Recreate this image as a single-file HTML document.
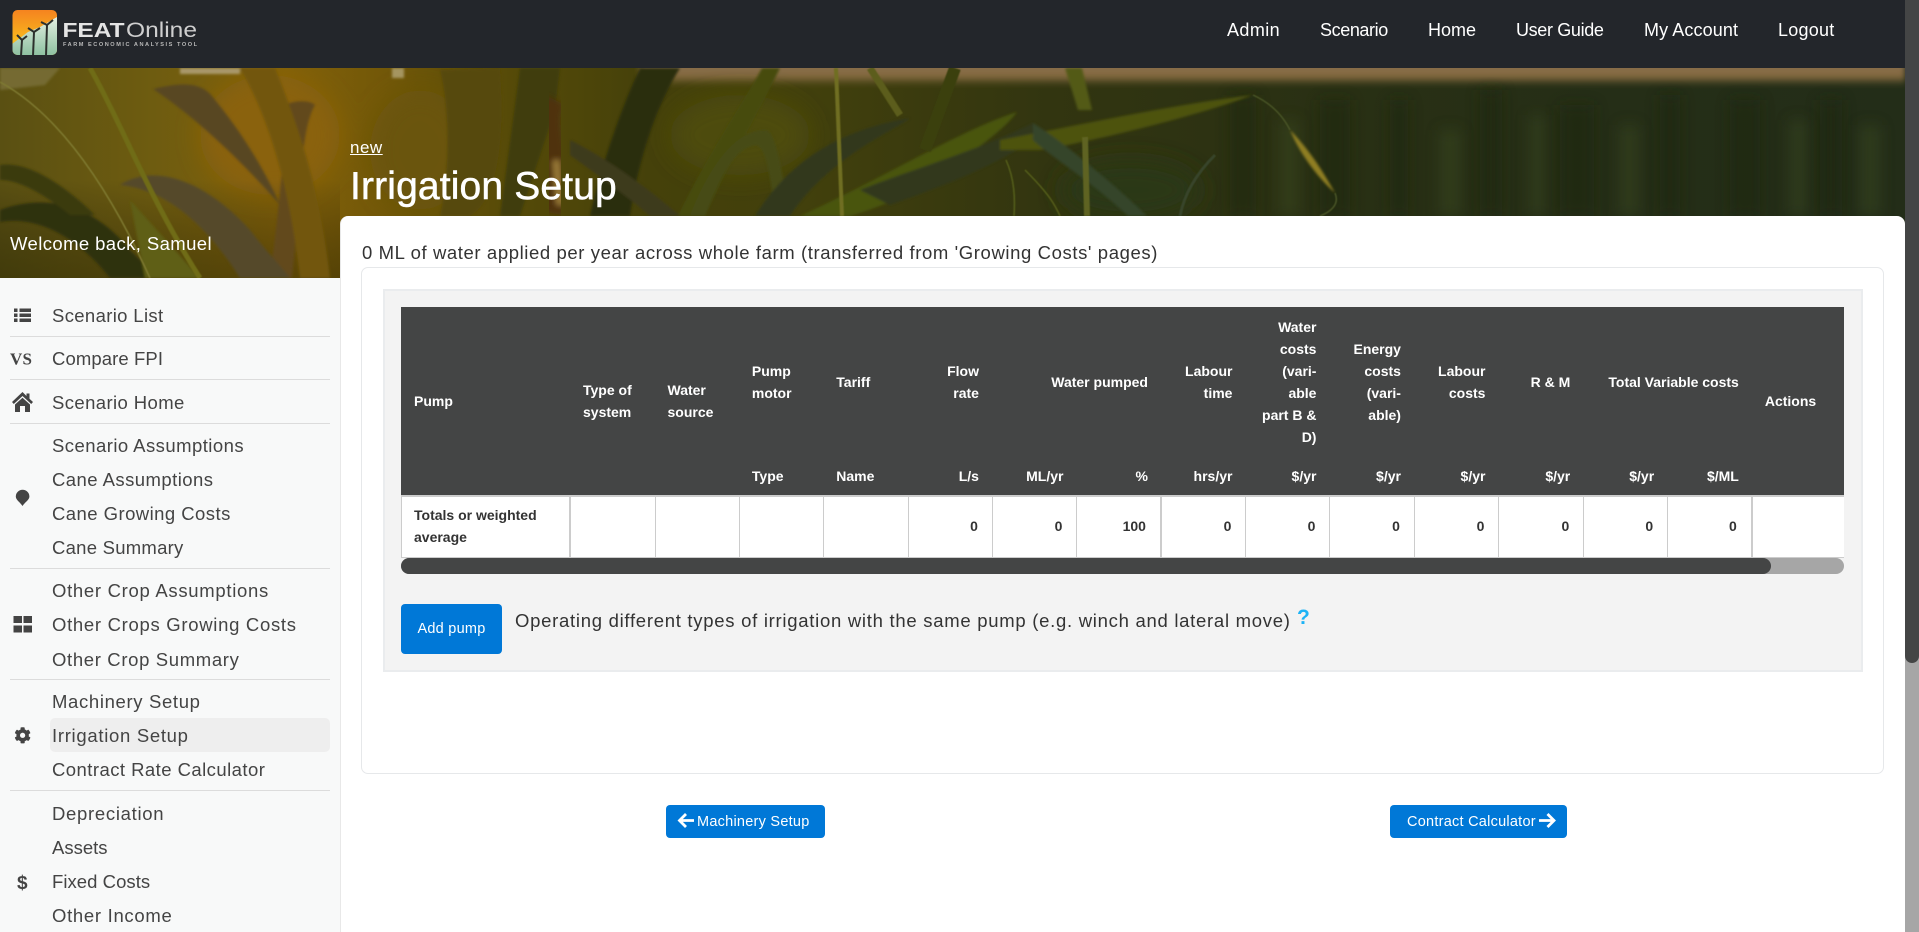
<!DOCTYPE html>
<html lang="en"><head><meta charset="utf-8"><title>Irrigation Setup</title>
<style>
*{box-sizing:border-box}
html,body{margin:0;padding:0;width:1919px;height:932px;overflow:hidden;background:#fff;font-family:"Liberation Sans",sans-serif}
.a{position:absolute;white-space:nowrap}
#top{position:absolute;left:0;top:0;width:1919px;height:68px;background:#23262b}
.nav{position:absolute;top:17px;line-height:26px;font-size:18px;color:#fff}
#side{position:absolute;left:0;top:278px;width:340px;height:654px;background:#f8f9f9}
.s{position:absolute;left:52px;font-size:18.5px;line-height:26px;color:#444;white-space:nowrap;letter-spacing:.4px}
.d{position:absolute;left:10px;width:320px;height:1px;background:#dcdcdc}
#card{position:absolute;left:340px;top:216px;width:1565px;height:716px;background:#fff;border-radius:8px 8px 0 0;border-left:1px solid #e8e8e8}
#inner{position:absolute;left:361px;top:267px;width:1523px;height:507px;border:1px solid #e6e8ea;border-radius:7px;background:#fff}
#box{position:absolute;left:383px;top:289px;width:1480px;height:383px;background:#f3f3f3;border:2px solid #eaecee}
#tw{position:absolute;left:401px;top:307px;width:1443px;height:251px;overflow:hidden}
table{border-collapse:separate;border-spacing:0;table-layout:fixed;width:1444px;font-size:14px;font-weight:700}
th{background:#444545;color:#fff;line-height:22px;padding:0 14px 0 12px;font-weight:700;text-align:left;vertical-align:middle}
th.r,td.r{text-align:right}
th.p{padding-left:13px}
td{height:63px;border-top:2px solid #ccc;border-bottom:1px solid #ccc;border-right:1px solid #ccc;background:#fff;color:#333;line-height:22px;padding:0 14px 2px 13px;vertical-align:middle}
td.f{border-left:1px solid #ccc;padding-left:12px}
td.t{border-right-width:2px}
.btn{position:absolute;background:#0078d7;color:#fff;font-size:14.5px;letter-spacing:.25px;border-radius:4px;text-align:center;white-space:nowrap}
#sb{position:absolute;left:1905px;top:0;width:14px;height:932px;background:#a6a6a6}
#sbt{position:absolute;left:1905px;top:0;width:14px;height:663px;background:#444545;border-radius:0 0 7px 7px}
</style></head><body>

<svg class="a" style="left:0;top:0" width="1905" height="278" viewBox="0 0 1905 278">
<defs>
<linearGradient id="bg" x1="0" x2="1" y1="0" y2="0">
<stop offset="0" stop-color="#5a5012"/><stop offset=".08" stop-color="#6e5c10"/><stop offset=".15" stop-color="#82610a"/><stop offset=".2" stop-color="#735808"/><stop offset=".27" stop-color="#554a08"/><stop offset=".34" stop-color="#45410a"/><stop offset=".42" stop-color="#42400c"/><stop offset=".55" stop-color="#323510"/><stop offset=".7" stop-color="#293014"/><stop offset=".85" stop-color="#252e17"/><stop offset="1" stop-color="#232d18"/>
</linearGradient>
<linearGradient id="sky" x1="0" x2="0" y1="0" y2="1"><stop offset="0" stop-color="#8a7050"/><stop offset=".6" stop-color="#84693f"/><stop offset="1" stop-color="#6a5a30" stop-opacity="0"/></linearGradient>
<linearGradient id="shade" x1="0" x2="0" y1="0" y2="1"><stop offset="0" stop-color="#000" stop-opacity="0"/><stop offset="1" stop-color="#1a1a00" stop-opacity=".38"/></linearGradient>
<filter id="b1"><feGaussianBlur stdDeviation="12"/></filter>
<filter id="b2"><feGaussianBlur stdDeviation="1.200"/></filter>
<filter id="b3"><feGaussianBlur stdDeviation=".6"/></filter>
<filter id="b4"><feGaussianBlur stdDeviation="3"/></filter>
<filter id="b5"><feGaussianBlur stdDeviation="7"/></filter>
</defs>
<rect x="0" y="68" width="1905" height="210" fill="url(#bg)"/>
<g filter="url(#b4)"><rect x="640" y="62" width="1265" height="24" fill="url(#sky)"/></g>
<g filter="url(#b5)" fill="#1b2510" opacity=".55">
<rect x="1230" y="95" width="26" height="121"/><rect x="1320" y="100" width="30" height="116"/><rect x="1390" y="100" width="18" height="116"/><rect x="1480" y="90" width="22" height="126"/><rect x="1560" y="105" width="34" height="111"/><rect x="1660" y="95" width="20" height="121"/><rect x="1730" y="100" width="30" height="116"/><rect x="1820" y="100" width="22" height="116"/>
</g>
<g filter="url(#b5)" fill="#3b4a20" opacity=".5">
<rect x="1280" y="120" width="18" height="96"/><rect x="1440" y="130" width="20" height="86"/><rect x="1530" y="115" width="14" height="101"/><rect x="1620" y="125" width="18" height="91"/><rect x="1790" y="120" width="16" height="96"/><rect x="1860" y="125" width="20" height="91"/>
</g>
<g filter="url(#b1)">
<ellipse cx="270" cy="135" rx="70" ry="60" fill="#8a6208"/>
<ellipse cx="420" cy="150" rx="50" ry="60" fill="#6a5407"/>
<ellipse cx="1130" cy="190" rx="70" ry="30" fill="#2c3812"/>
<ellipse cx="740" cy="135" rx="70" ry="40" fill="#4d4b10"/>
</g>
<rect x="0" y="180" width="340" height="98" fill="url(#shade)"/>
<g filter="url(#b2)">
<rect x="180" y="68" width="60" height="6" fill="#a9986a"/>
<rect x="392" y="68" width="12" height="10" fill="#a59560"/>
<path d="M0,68 H60 L45,85 L0,90Z" fill="#746a30"/>
<path d="M153,89 C190,80 205,85 215,100 C240,130 265,170 280,205 C250,170 200,120 153,89Z" fill="#584722"/>
<path d="M285,105 C295,100 310,100 315,105 C300,130 300,200 292,278 L270,278 C280,200 285,150 285,105Z" fill="#62491a"/>
<path d="M240,68 L275,68 C300,130 320,190 330,278 L300,278 C290,190 270,120 240,68Z" fill="#725608"/>
<path d="M120,185 C150,165 200,175 250,230 C265,250 280,265 290,278 L240,278 C210,230 170,190 120,185Z" fill="#544a2c"/>
<path d="M0,210 C40,195 90,200 130,250 C150,270 160,278 160,278 L110,278 C80,240 40,215 0,222Z" fill="#2d3010"/>
<path d="M0,165 C30,160 70,190 95,215 L70,215 C45,195 20,180 0,180Z" fill="#3b3a10"/>
<path d="M130,200 L200,278 L145,278 Z" fill="#5f5e12"/>
<path d="M630,216 C640,150 660,100 680,68 L640,68 C620,110 600,170 590,216Z" fill="#2c2d09"/>
<path d="M440,70 L500,68 C505,130 500,200 470,216 L440,216 C450,170 450,110 440,70Z" fill="#574a08"/>
<path d="M520,68 H560 L555,110 L520,216 H500Z" fill="#3f3c08"/>
<path d="M678,216 C710,150 745,100 762,68 L780,68 C760,110 730,160 705,216Z" fill="#474b10"/>
<path d="M690,216 C720,140 750,130 765,130 C775,130 780,160 790,216 L775,216 C770,170 765,145 755,145 C730,150 715,190 705,216Z" fill="#464b18"/>
<path d="M755,216 C790,160 840,130 910,118 C900,128 830,155 790,216Z" fill="#33391f"/>
<path d="M570,140 C610,160 650,190 680,216 L650,216 C620,190 590,170 570,155Z" fill="#3c3a1e"/>
<path d="M800,216 C880,180 960,130 1017,112 C1000,135 960,160 930,180 C900,200 870,210 850,216Z" fill="#48540f"/>
<path d="M860,190 C910,170 980,150 1033,123 L1040,135 C990,170 930,190 890,205Z" fill="#30381f"/>
<path d="M1000,140 C1080,125 1170,105 1253,95 C1200,115 1100,140 1040,150 L1000,150Z" fill="#4d5210"/>
<path d="M1033,123 C1060,140 1110,180 1147,216 L1128,216 C1090,180 1055,160 1033,140Z" fill="#35452a"/>
<path d="M1065,68 H1082 L1092,110 H1078Z" fill="#525a18"/>
<path d="M1290,130 C1310,150 1325,175 1335,193 C1315,175 1298,150 1290,130Z" fill="#8f7e20"/>
</g>
<g filter="url(#b3)" fill="none">
<path d="M1085,137 L1087,216" stroke="#5e6420" stroke-width="6"/>
<path d="M0,82 C60,115 110,190 150,278" stroke="#7f7a32" stroke-width="1.500"/>
<path d="M90,68 C120,120 150,200 200,278" stroke="#6f6c16" stroke-width="5"/>
<path d="M836,68 L842,216" stroke="#6f6e20" stroke-width="4"/>
<path d="M870,68 L900,115" stroke="#5c5d1a" stroke-width="7"/>
<path d="M955,68 L925,150" stroke="#3b4010" stroke-width="12"/>
<path d="M1253,95 C1275,105 1285,120 1290,130 M1335,193 C1340,205 1330,212 1320,216" stroke="#4a5528" stroke-width="1.500"/>
<path d="M1025,170 C1050,195 1055,205 1060,216 M1006,160 C1015,180 1015,200 1014,216" stroke="#555f1a" stroke-width="1.500"/>
<path d="M1180,216 C1185,190 1200,170 1215,155" stroke="#38452a" stroke-width="3"/>
</g>
<g filter="url(#b4)" fill="none">
<path d="M555,100 C540,130 565,150 552,213" stroke="#50330f" stroke-width="20"/>
<path d="M556,160 L560,205" stroke="#9b7c38" stroke-width="7"/>
</g>
</svg>

<div id="top"></div>
<svg class="a" style="left:0;top:0" width="210" height="68" viewBox="0 0 210 68">
<defs>
<linearGradient id="lg" x1="0" x2="0" y1="0" y2="1"><stop offset="0" stop-color="#f5831f"/><stop offset=".6" stop-color="#f8b41e"/><stop offset="1" stop-color="#f7d220"/></linearGradient>
<linearGradient id="lg2" x1="0" x2="0" y1="0" y2="1"><stop offset="0" stop-color="#e4efe2"/><stop offset="1" stop-color="#8cc0a0"/></linearGradient>
<clipPath id="lc"><rect x="12.500" y="10" width="44.500" height="45" rx="5"/></clipPath>
</defs>
<g clip-path="url(#lc)">
<rect x="12" y="10" width="46" height="46" fill="url(#lg)"/>
<path d="M12,44 L28,32 L40,27 L57,17 V56 H12Z" fill="url(#lg2)"/>
<path d="M21,56 L22,40 L17,35 M22,40 L27,36 M33,56 L34,32 L28,28 M34,32 L40,28 M46,56 L47,25 L41,22 M47,25 L53,20" fill="none" stroke="#2c2f2c" stroke-width="2"/>
</g>
<text x="62.500" y="37" font-family="Liberation Sans" font-size="20" font-weight="700" fill="#e4e4e4" textLength="62" lengthAdjust="spacingAndGlyphs">FEAT</text>
<text x="126" y="37" font-family="Liberation Sans" font-size="21" fill="#cfcfcf" textLength="71" lengthAdjust="spacingAndGlyphs">Online</text>
<text x="63" y="46" font-family="Liberation Sans" font-size="5.600" font-weight="700" fill="#b8b8b8" textLength="134">FARM ECONOMIC ANALYSIS TOOL</text>
</svg>

<div class="nav" style="left:1227px;letter-spacing:.4px">Admin</div>
<div class="nav" style="left:1320px;letter-spacing:-.4px">Scenario</div>
<div class="nav" style="left:1428px">Home</div>
<div class="nav" style="left:1516px;letter-spacing:-.35px">User Guide</div>
<div class="nav" style="left:1644px;letter-spacing:.1px">My Account</div>
<div class="nav" style="left:1778px;letter-spacing:.25px">Logout</div>

<a class="a" style="left:350px;top:136px;font-size:17px;line-height:24px;letter-spacing:.5px;color:#fff;text-decoration:underline">new</a>
<div class="a" style="left:350px;top:163px;font-size:39px;line-height:48px;letter-spacing:.15px;color:#fff;-webkit-text-stroke:.5px #fff">Irrigation Setup</div>
<div class="a" style="left:10px;top:231px;font-size:18.5px;line-height:26px;letter-spacing:.4px;color:#fff">Welcome back, Samuel</div>

<div id="side">
</div>
<div class="a" style="left:50px;top:718px;width:280px;height:34px;background:#eeeeee;border-radius:5px"></div>
<div class="d" style="top:336px"></div><div class="d" style="top:379px"></div><div class="d" style="top:423px"></div><div class="d" style="top:568px"></div><div class="d" style="top:679px"></div><div class="d" style="top:790px"></div>
<div class="s" style="top:303px;letter-spacing:.35px">Scenario List</div>
<div class="s" style="top:346px;letter-spacing:.1px">Compare FPI</div>
<div class="s" style="top:390px">Scenario Home</div>
<div class="s" style="top:433px;letter-spacing:.45px">Scenario Assumptions</div>
<div class="s" style="top:467px;letter-spacing:.45px">Cane Assumptions</div>
<div class="s" style="top:501px;letter-spacing:.45px">Cane Growing Costs</div>
<div class="s" style="top:535px;letter-spacing:.25px">Cane Summary</div>
<div class="s" style="top:578px;letter-spacing:.7px">Other Crop Assumptions</div>
<div class="s" style="top:612px;letter-spacing:.7px">Other Crops Growing Costs</div>
<div class="s" style="top:647px;letter-spacing:.65px">Other Crop Summary</div>
<div class="s" style="top:689px;letter-spacing:.65px">Machinery Setup</div>
<div class="s" style="top:723px;letter-spacing:.7px">Irrigation Setup</div>
<div class="s" style="top:757px;letter-spacing:.45px">Contract Rate Calculator</div>
<div class="s" style="top:801px;letter-spacing:.7px">Depreciation</div>
<div class="s" style="top:835px;letter-spacing:0">Assets</div>
<div class="s" style="top:869px;letter-spacing:.05px">Fixed Costs</div>
<div class="s" style="top:903px;letter-spacing:.7px">Other Income</div>

<svg class="a" style="left:0;top:290px" width="50" height="642" viewBox="0 290 50 642" fill="#444">
<rect x="14" y="308.500" width="3.500" height="3.500"/><rect x="19.500" y="308.500" width="11.500" height="3.500"/>
<rect x="14" y="313.500" width="3.500" height="3.500"/><rect x="19.500" y="313.500" width="11.500" height="3.500"/>
<rect x="14" y="318.500" width="3.500" height="3.500"/><rect x="19.500" y="318.500" width="11.500" height="3.500"/>
<text x="10" y="364.500" font-family="Liberation Serif" font-weight="700" font-size="17" textLength="22">VS</text>
<path d="M22.500,392 L12,402 L13.800,404 L22.500,396 L31.200,404 L33,402 L29.500,398.700 V393.500 H26.500 V396 Z"/>
<path d="M15,404.500 L22.500,397.700 L30,404.500 V412 H25 V406 H20 V412 H15Z"/>
<path d="M22.500,506 C20,502 15.800,500 15.800,496.500 a6.800,6.800 0 0 1 13.600,0 C29.400,500 25,502 22.500,506Z"/>
<rect x="13.500" y="616" width="8.500" height="7"/><rect x="23.500" y="616" width="8.500" height="7"/><rect x="13.500" y="625.500" width="8.500" height="7"/><rect x="23.500" y="625.500" width="8.500" height="7"/>
<g transform="translate(14.300,727) scale(.0325)"><path fill-rule="evenodd" d="M487.400 315.700l-42.600-24.600c4.300-23.200 4.300-47 0-70.200l42.600-24.600c4.900-2.800 7.100-8.600 5.500-14-11.100-35.600-30-67.800-54.700-94.600-3.800-4.100-10-5.100-14.800-2.300L380.800 110c-17.900-15.400-38.500-27.300-60.800-35.100V25.800c0-5.600-3.900-10.500-9.400-11.700-36.700-8.200-74.300-7.800-109.200 0-5.500 1.200-9.400 6.100-9.400 11.700V75c-22.200 7.900-42.800 19.800-60.800 35.100L88.700 85.500c-4.900-2.800-11-1.900-14.800 2.300-24.700 26.700-43.600 58.900-54.700 94.600-1.700 5.400.6 11.200 5.500 14L67.300 221c-4.300 23.200-4.300 47 0 70.200l-42.600 24.600c-4.900 2.800-7.100 8.600-5.500 14 11.100 35.600 30 67.800 54.700 94.600 3.800 4.100 10 5.100 14.800 2.300l42.600-24.600c17.900 15.400 38.500 27.300 60.800 35.100v49.200c0 5.600 3.900 10.500 9.400 11.700 36.700 8.200 74.300 7.800 109.200 0 5.500-1.200 9.400-6.100 9.400-11.700v-49.200c22.200-7.900 42.800-19.800 60.800-35.100l42.600 24.600c4.900 2.800 11 1.900 14.800-2.300 24.700-26.700 43.600-58.900 54.700-94.600 1.500-5.500-.7-11.300-5.600-14.100zM256 336c-44.100 0-80-35.900-80-80s35.900-80 80-80 80 35.900 80 80-35.900 80-80 80z"/></g>
<text x="17" y="889" font-family="Liberation Sans" font-weight="700" font-size="19">$</text>
</svg>

<div id="card"></div>
<div class="a" style="left:362px;top:240px;font-size:18.5px;line-height:26px;letter-spacing:.6px;color:#333">0 ML of water applied per year across whole farm (transferred from 'Growing Costs' pages)</div>
<div id="inner"></div>
<div id="box"></div>

<div id="tw">
<table>
<colgroup><col style="width:170px"><col style="width:84.5px"><col style="width:84.4px"><col style="width:84.4px"><col style="width:84.3px"><col style="width:84.4px"><col style="width:84.5px"><col style="width:84.5px"><col style="width:84.5px"><col style="width:84px"><col style="width:84.5px"><col style="width:84.5px"><col style="width:84.8px"><col style="width:83.9px"><col style="width:84.7px"><col style="width:92.1px"></colgroup>
<thead>
<tr style="height:150px">
<th rowspan="2" class="p">Pump</th>
<th rowspan="2">Type of<br>system</th>
<th rowspan="2">Water<br>source</th>
<th>Pump<br>motor</th>
<th>Tariff</th>
<th class="r">Flow<br>rate</th>
<th class="r" colspan="2">Water pumped</th>
<th class="r">Labour<br>time</th>
<th class="r">Water<br>costs<br>(vari-<br>able<br>part B &amp;<br>D)</th>
<th class="r">Energy<br>costs<br>(vari-<br>able)</th>
<th class="r">Labour<br>costs</th>
<th class="r">R &amp; M</th>
<th class="r" colspan="2">Total Variable costs</th>
<th rowspan="2">Actions</th>
</tr>
<tr style="height:38px">
<th>Type</th><th>Name</th><th class="r">L/s</th><th class="r">ML/yr</th><th class="r">%</th><th class="r">hrs/yr</th><th class="r">$/yr</th><th class="r">$/yr</th><th class="r">$/yr</th><th class="r">$/yr</th><th class="r">$/yr</th><th class="r">$/ML</th>
</tr>
</thead>
<tbody><tr>
<td class="f t">Totals or weighted average</td><td></td><td></td><td></td><td></td><td class="r">0</td><td class="r">0</td><td class="r t">100</td><td class="r">0</td><td class="r">0</td><td class="r">0</td><td class="r">0</td><td class="r">0</td><td class="r">0</td><td class="r t">0</td><td style="border-right:0"></td>
</tr></tbody>
</table>
</div>
<div class="a" style="left:401px;top:558px;width:1443px;height:16px;background:#a6a6a6;border-radius:8px"></div>
<div class="a" style="left:401px;top:558px;width:1370px;height:16px;background:#444545;border-radius:8px"></div>

<div class="btn" style="left:401px;top:604px;width:101px;height:50px;line-height:51px">Add pump</div>
<div class="a" style="left:515px;top:608px;font-size:18.5px;line-height:26px;letter-spacing:.72px;color:#333">Operating different types of irrigation with the same pump (e.g. winch and lateral move)</div>
<div class="a" style="left:1297px;top:605px;font-size:21px;line-height:26px;font-weight:700;color:#1db3f6">?</div>

<div class="btn" style="left:666px;top:805px;width:159px;height:33px;line-height:35px;text-align:left;padding-left:31px">Machinery Setup</div>
<div class="btn" style="left:1390px;top:805px;width:177px;height:33px;line-height:35px;text-align:left;padding-left:17px">Contract Calculator</div>
<svg class="a" style="left:670px;top:805px" width="30" height="33" viewBox="670 805 30 33" fill="none" stroke="#fff" stroke-width="2.800"><path d="M679.500,820.500 H694 M686,814 L679.500,820.500 L686,827"/></svg>
<svg class="a" style="left:1530px;top:805px" width="30" height="33" viewBox="1530 805 30 33" fill="none" stroke="#fff" stroke-width="2.800"><path d="M1539,820.500 H1554 M1547.500,814 L1554,820.500 L1547.500,827"/></svg>

<div id="sb"></div><div id="sbt"></div>
</body></html>
